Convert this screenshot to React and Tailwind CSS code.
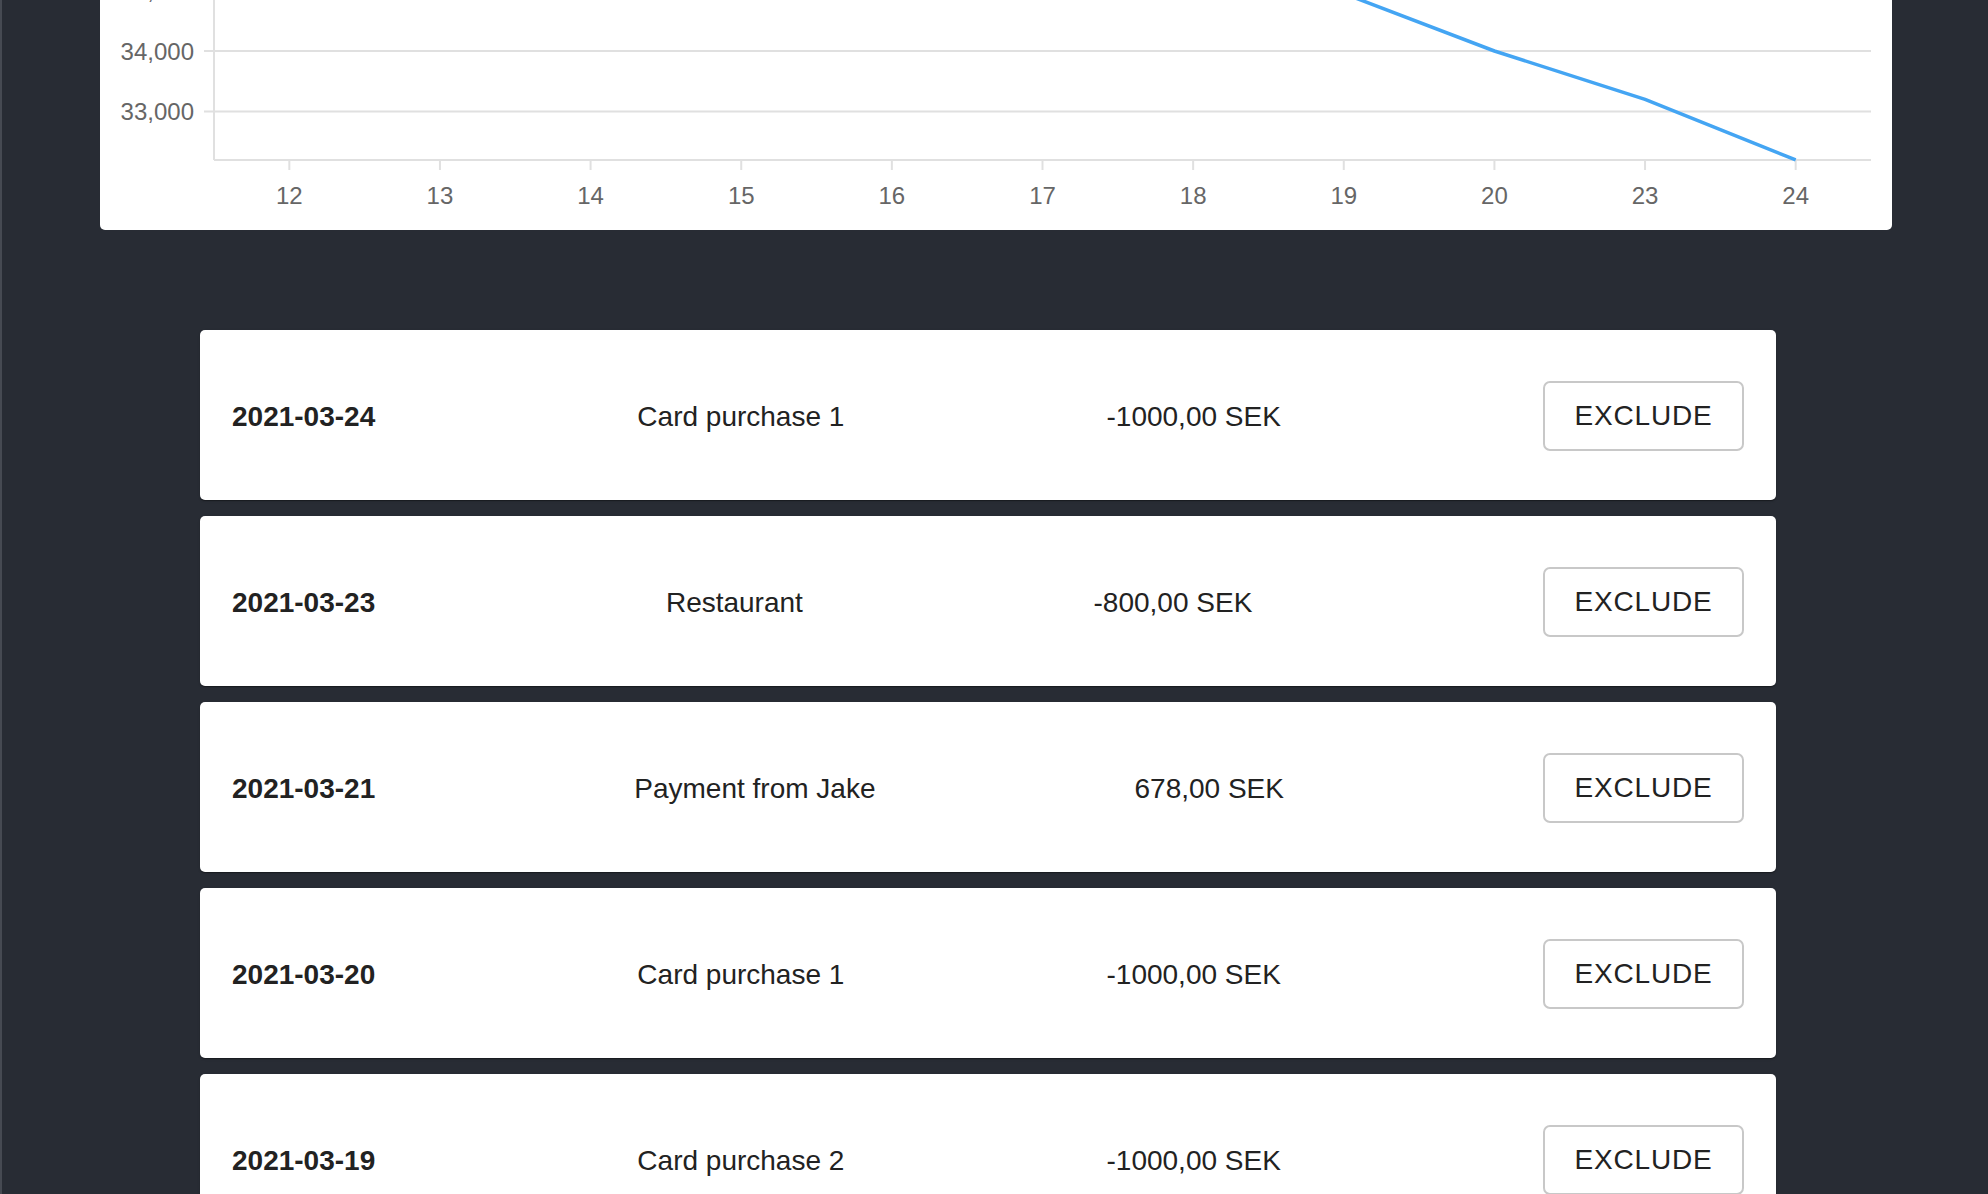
import React from 'react';

const days = [12, 13, 14, 15, 16, 17, 18, 19, 20, 23, 24];
const balances = [38400, 37900, 37400, 36900, 36300, 35800, 35400, 34950, 34000, 33200, 32200];

const transactions = [
  { date: '2021-03-24', text: 'Card purchase 1', amount: '-1000,00 SEK' },
  { date: '2021-03-23', text: 'Restaurant', amount: '-800,00 SEK' },
  { date: '2021-03-21', text: 'Payment from Jake', amount: '678,00 SEK' },
  { date: '2021-03-20', text: 'Card purchase 1', amount: '-1000,00 SEK' },
  { date: '2021-03-19', text: 'Card purchase 2', amount: '-1000,00 SEK' },
];

// chart geometry, in card pixels
const plotLeft = 114;
const plotRight = 1771;
const axisY = 160;
const band = (plotRight - plotLeft) / days.length;
const xAt = (i) => plotLeft + band * (i + 0.5);
const yAt = (v) => 51 - (v - 34000) * 0.0605;

const BalanceChart = () => {
  const points = balances.map((v, i) => `${xAt(i)},${yAt(v)}`).join(' ');
  const yTicks = [35000, 34000, 33000];

  return (
    <svg width="1792" height="230" className="block">
      {/* grid */}
      {yTicks.map((t) => (
        <g key={t}>
          <line x1={plotLeft - 10} x2={plotRight} y1={yAt(t)} y2={yAt(t)} stroke="#e0e0e0" strokeWidth="2" />
          <text x="94" y={yAt(t) + 8.5} textAnchor="end" fontSize="24" fill="#666" fontFamily="Liberation Sans, Arial, sans-serif">
            {t.toLocaleString('en-US')}
          </text>
        </g>
      ))}
      {/* axes */}
      <line x1={plotLeft} x2={plotLeft} y1="-20" y2={axisY} stroke="#e0e0e0" strokeWidth="2" />
      <line x1={plotLeft} x2={plotRight} y1={axisY} y2={axisY} stroke="#e0e0e0" strokeWidth="2" />
      {days.map((d, i) => (
        <g key={d}>
          <line x1={xAt(i)} x2={xAt(i)} y1={axisY} y2={axisY + 10} stroke="#e0e0e0" strokeWidth="2" />
          <text x={xAt(i)} y="204" textAnchor="middle" fontSize="24" fill="#666" fontFamily="Liberation Sans, Arial, sans-serif">
            {d}
          </text>
        </g>
      ))}
      <polyline points={points} fill="none" stroke="#44a5f3" strokeWidth="3.5" strokeLinejoin="round" />
    </svg>
  );
};

const TransactionRow = ({ tx }) => (
  <div className="h-[170px] w-[1576px] bg-white rounded-[5px] flex items-center justify-between px-8 pt-[3px] text-[28px] text-[#222] shadow-[0_2px_1px_-1px_rgba(0,0,0,0.2),0_1px_1px_0_rgba(0,0,0,0.14),0_1px_3px_0_rgba(0,0,0,0.12)]">
    <span className="font-bold">{tx.date}</span>
    <span>{tx.text}</span>
    <span>{tx.amount}</span>
    <button className="h-[70px] w-[201px] -mt-[2px] border-2 border-[#c8c8c8] rounded-[7px] text-[28px] tracking-[0.8px] text-[#222] bg-white">
      EXCLUDE
    </button>
  </div>
);

export default function App() {
  return (
    <div
      className="h-screen overflow-hidden bg-[#282c34] border-l-2 border-[#464a52]"
      style={{ fontFamily: '"Liberation Sans", Arial, Helvetica, sans-serif' }}
    >
      {/* Balance chart */}
      <div className="ml-[98px] w-[1792px] h-[230px] bg-white rounded-b-[5px] overflow-hidden">
        <BalanceChart />
      </div>

      {/* Transactions */}
      <div className="ml-[198px] mt-[100px] flex flex-col gap-4">
        {transactions.map((tx, i) => (
          <TransactionRow key={i} tx={tx} />
        ))}
      </div>
    </div>
  );
}
